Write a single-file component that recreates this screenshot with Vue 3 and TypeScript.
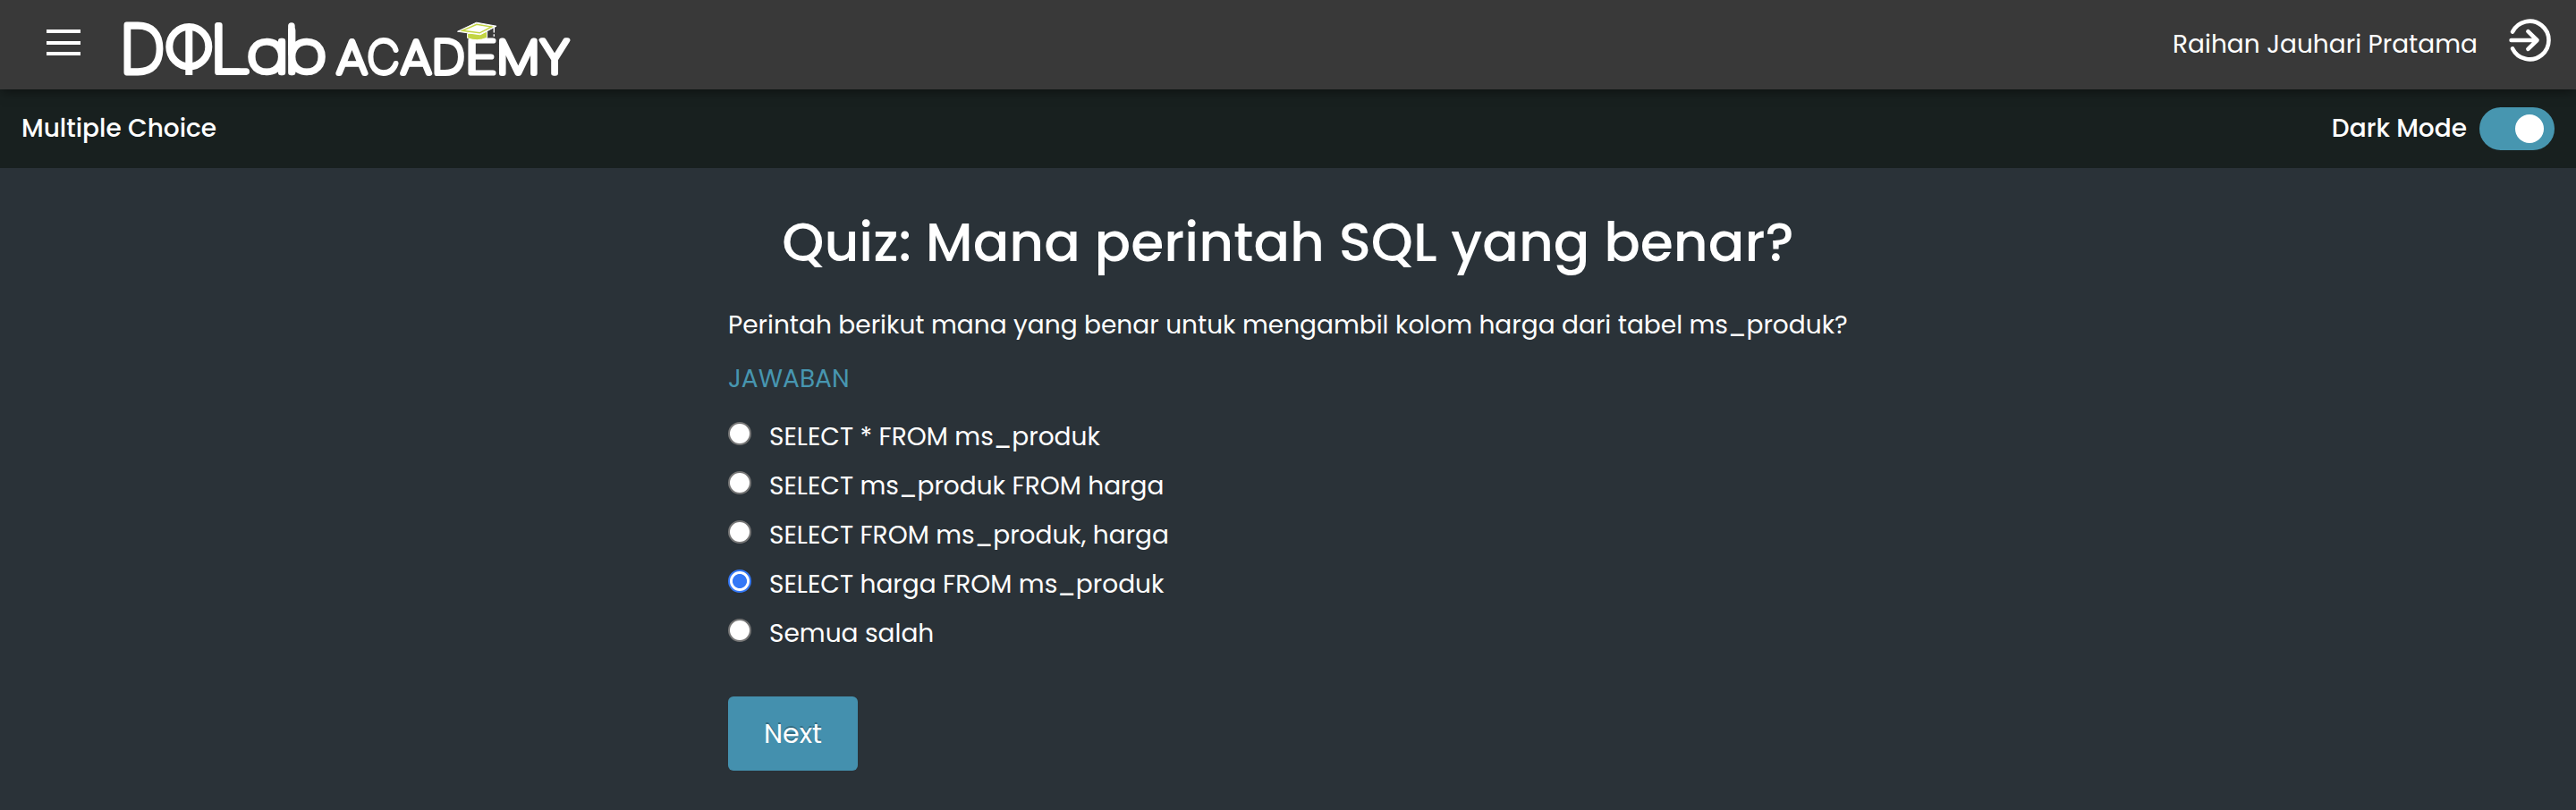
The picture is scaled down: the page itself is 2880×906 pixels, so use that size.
<script setup lang="ts">
import { ref } from 'vue'

interface Glyph {
  ch: string
  left: number
  right: number
  inkLeft: number
  inkRight: number
  weight?: number
}

// Fits each letter of the wordmark between its left and right edge.
function layout(glyphs: Glyph[], size: number, stroke: number, baseline: number) {
  return glyphs.map((g) => {
    const weight = g.weight ?? stroke
    const scale = (g.right - g.left - weight) / ((g.inkRight - g.inkLeft) * size)
    const x = g.left + weight / 2 - g.inkLeft * size * scale
    return {
      ch: g.ch,
      weight,
      transform: `translate(${x.toFixed(2)} ${baseline}) scale(${scale.toFixed(3)} 1)`,
    }
  })
}

const capitals = layout(
  [
    { ch: 'D', left: 138, right: 183.3, inkLeft: 0.08, inkRight: 0.65, weight: 6.9 },
    { ch: 'L', left: 240, right: 270, inkLeft: 0.08, inkRight: 0.375, weight: 6.2 },
  ],
  74, 6.6, 80.7,
)
const smalls = layout(
  [
    { ch: 'a', left: 276.7, right: 319.2, inkLeft: 0.05, inkRight: 0.59 },
    { ch: 'b', left: 322, right: 364.4, inkLeft: 0.08, inkRight: 0.622 },
  ],
  63, 6.6, 80.7,
)
const academy = layout(
  [
    { ch: 'A', left: 375, right: 411.7, inkLeft: 0.02, inkRight: 0.575 },
    { ch: 'C', left: 410.7, right: 446.3, inkLeft: 0.05, inkRight: 0.715 },
    { ch: 'A', left: 446.7, right: 483.3, inkLeft: 0.02, inkRight: 0.575 },
    { ch: 'D', left: 485, right: 519.3, inkLeft: 0.08, inkRight: 0.65, weight: 6.2 },
    { ch: 'E', left: 524, right: 554, inkLeft: 0.08, inkRight: 0.435, weight: 5.2 },
    { ch: 'M', left: 558, right: 600.7, inkLeft: 0.08, inkRight: 0.717 },
    { ch: 'Y', left: 602, right: 638, inkLeft: 0.012, inkRight: 0.505, weight: 5.5 },
  ],
  52.5, 5.8, 81.6,
)

const options = [
  'SELECT * FROM ms_produk',
  'SELECT ms_produk FROM harga',
  'SELECT FROM ms_produk, harga',
  'SELECT harga FROM ms_produk',
  'Semua salah',
]
const answer = ref(3)
const dark = ref(true)
</script>

<template>
  <div class="page" :class="{ light: !dark }">
    <header class="topbar">
      <button class="menu" type="button" aria-label="Menu">
        <span></span><span></span><span></span>
      </button>
      <svg class="logo" viewBox="130 16 520 76" width="520" height="76" aria-label="DQLab Academy">
        <g class="letters">
          <text v-for="g in capitals" :key="g.ch" :transform="g.transform" :stroke-width="g.weight" font-size="74">{{ g.ch }}</text>
          <text v-for="g in smalls" :key="g.ch" :transform="g.transform" :stroke-width="g.weight" font-size="63">{{ g.ch }}</text>
          <text v-for="(g, i) in academy" :key="i" :transform="g.transform" :stroke-width="g.weight" font-size="52.5">{{ g.ch }}</text>
        </g>
        <ellipse cx="211.3" cy="52.2" rx="22" ry="22.2" fill="none" stroke="#fff" stroke-width="8" />
        <rect x="207.3" y="28" width="8" height="56" fill="#fff" />
        <g stroke="#fff" stroke-width="7.6" stroke-linecap="round">
          <line x1="244" y1="29" x2="244" y2="40" />
          <line x1="250" y1="80.1" x2="275.2" y2="80.1" />
          <line x1="325.9" y1="29" x2="325.9" y2="60" />
        </g>
        <path d="M522.6 37.5V42.6Q533 47 544.6 42.3V35.5Z" fill="#c3d544" stroke="#fff" stroke-width="1" />
        <path d="M511.5 35.2L532.6 25.2L555 29.2L537 38.8Z" fill="#fff" stroke="#fff" stroke-width="1" stroke-linejoin="round" />
        <path d="M517 34.3L533 27.2L549.6 30L536.3 36.8Z" fill="#fff" stroke="#c3d544" stroke-width="1.5" />
        <path d="M552.3 31V36.5M552.3 38.2V40.8" stroke="#fff" stroke-width="1.4" />
      </svg>
      <span class="user">Raihan Jauhari Pratama</span>
      <svg class="logout" viewBox="0 0 50 50" width="50" height="50" fill="none" stroke="#fff" stroke-width="4.6" stroke-linecap="round" stroke-linejoin="round">
        <path d="M6.1 15.6A21.3 21.3 0 1 1 6.1 34.4" />
        <path d="M4.6 25H33.5M23.4 15.2L33.5 25L23.4 34.8" />
      </svg>
    </header>

    <div class="subbar">
      <span>Multiple Choice</span>
      <label class="mode">
        Dark Mode
        <input v-model="dark" type="checkbox" class="switch" />
      </label>
    </div>

    <main class="quiz">
      <h1>Quiz: Mana perintah SQL yang benar?</h1>
      <p class="question">Perintah berikut mana yang benar untuk mengambil kolom harga dari tabel ms_produk?</p>
      <p class="caption">JAWABAN</p>
      <div class="options">
        <label v-for="(option, i) in options" :key="option">
          <input v-model="answer" type="radio" name="answer" :value="i" />
          <span>{{ option }}</span>
        </label>
      </div>
      <button class="next" type="button">Next</button>
    </main>
  </div>
</template>

<style>
body {
  margin: 0;
  background: #2a3238;
}
</style>

<style scoped>
.page {
  min-height: 906px;
  background: #2a3238;
  color: #fff;
  font: 400 28px/42px Poppins, Inter, "Open Sans", sans-serif;
}
.page.light {
  background: #fff;
  color: #222;
}
button {
  border: 0;
  padding: 0;
  font: inherit;
  color: inherit;
  background: none;
}
.topbar {
  position: relative;
  z-index: 1;
  display: flex;
  align-items: center;
  box-sizing: border-box;
  height: 100px;
  padding: 0 27px 0 52px;
  color: #fff;
  background: #393939;
  box-shadow: 0 4px 12px -2px rgba(0, 0, 0, 0.5);
}
.menu {
  display: flex;
  flex-direction: column;
  gap: 8.5px;
  margin-bottom: 5px;
}
.menu span {
  width: 38px;
  height: 4px;
  background: #fff;
}
.logo {
  margin: 8px 0 0 40px;
  overflow: visible;
}
.letters {
  fill: #fff;
  stroke: #fff;
  stroke-linejoin: round;
  font-family: Poppins, Inter, sans-serif;
  font-weight: 200;
}
.user {
  margin-left: auto;
}
.logout {
  margin: 0 0 10px 33px;
}
.subbar {
  display: flex;
  align-items: center;
  justify-content: space-between;
  box-sizing: border-box;
  height: 88px;
  padding: 0 24px;
  font-weight: 500;
  color: #fff;
  background: #18201f;
}
.mode {
  display: flex;
  align-items: center;
  gap: 14px;
}
.switch {
  appearance: none;
  display: flex;
  align-items: center;
  box-sizing: border-box;
  width: 84px;
  height: 48px;
  margin: 0;
  padding: 0 12px;
  border-radius: 24px;
  background: #888;
}
.switch::before {
  content: "";
  width: 32px;
  height: 32px;
  border-radius: 50%;
  background: #fff;
}
.switch:checked {
  justify-content: flex-end;
  background: #4796b0;
}
.quiz {
  width: 1252px;
  margin: 0 auto;
  padding-top: 38px;
}
h1 {
  margin: 0 0 27px;
  font-size: 60px;
  line-height: 90px;
  font-weight: 500;
  text-align: center;
}
p {
  margin: 0;
  white-space: nowrap;
}
.question {
  margin-bottom: 18px;
}
.caption {
  margin-bottom: 23px;
  color: #4796b0;
}
.options {
  display: flex;
  flex-direction: column;
  gap: 13px;
}
.options label {
  display: flex;
  align-items: flex-start;
  gap: 20px;
}
.options input {
  appearance: none;
  flex: none;
  box-sizing: border-box;
  width: 26px;
  height: 26px;
  margin: 4px 0 0;
  border: 2px solid #767676;
  border-radius: 50%;
  background: #fff;
}
.options input:checked {
  border: 2.5px solid #3478f6;
  background: radial-gradient(circle, #3478f6 7.6px, #fff 8.4px);
}
.next {
  width: 145px;
  height: 83px;
  margin-top: 49px;
  border-radius: 6px;
  font-size: 30px;
  line-height: 45px;
  color: #fff;
  background: #4490ae;
  text-shadow: 0 -2px 0 rgba(0, 0, 0, 0.25);
}
</style>
